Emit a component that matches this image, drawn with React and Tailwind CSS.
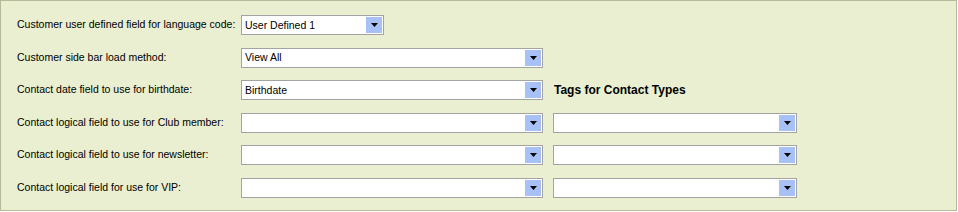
import React from 'react';

const font = { fontFamily: '"Liberation Sans", Arial, sans-serif' };

function Select({ value = '', width }) {
  return (
    <div
      className={`relative flex h-[20px] items-center border border-[#a3a3a3] bg-white ${width}`}
    >
      <span className="pl-[3px] text-[10.5px] leading-none text-black">{value}</span>
      <div className="absolute right-[1px] top-[1px] bottom-[1px] flex w-[16px] items-center justify-center bg-[#a7c0f5]">
        <svg width="7" height="4" viewBox="0 0 7 4">
          <path d="M0 0h7L3.5 4z" fill="#000" />
        </svg>
      </div>
    </div>
  );
}

const rows = [
  { label: 'Customer user defined field for language code:', value: 'User Defined 1', width: 'w-[143px]' },
  { label: 'Customer side bar load method:', value: 'View All', width: 'w-[302px]' },
  { label: 'Contact date field to use for birthdate:', value: 'Birthdate', width: 'w-[302px]', tags: true },
  { label: 'Contact logical field to use for Club member:', width: 'w-[302px]', second: true },
  { label: 'Contact logical field to use for newsletter:', width: 'w-[302px]', second: true },
  { label: 'Contact logical field for use for VIP:', width: 'w-[302px]', second: true },
];

export default function App() {
  return (
    <div className="h-[212px] w-[958px] bg-white" style={font}>
      <div className="h-[211px] w-[957px] border border-[#b3bc96] bg-[#e9efd0] pl-[16px] pt-[14px]">
        <div className="flex flex-col gap-[12.5px]">
          {rows.map((r) => (
            <div key={r.label} className="flex h-[20px] items-center">
              <div className="w-[224px] whitespace-nowrap text-[10.5px] text-black">{r.label}</div>
              <Select value={r.value} width={r.width} />
              {r.tags && (
                <div className="ml-[11px] whitespace-nowrap text-[12px] font-bold text-black">Tags for Contact Types</div>
              )}
              {r.second && (
                <div className="ml-[10px]">
                  <Select width="w-[244px]" />
                </div>
              )}
            </div>
          ))}
        </div>
      </div>
    </div>
  );
}
